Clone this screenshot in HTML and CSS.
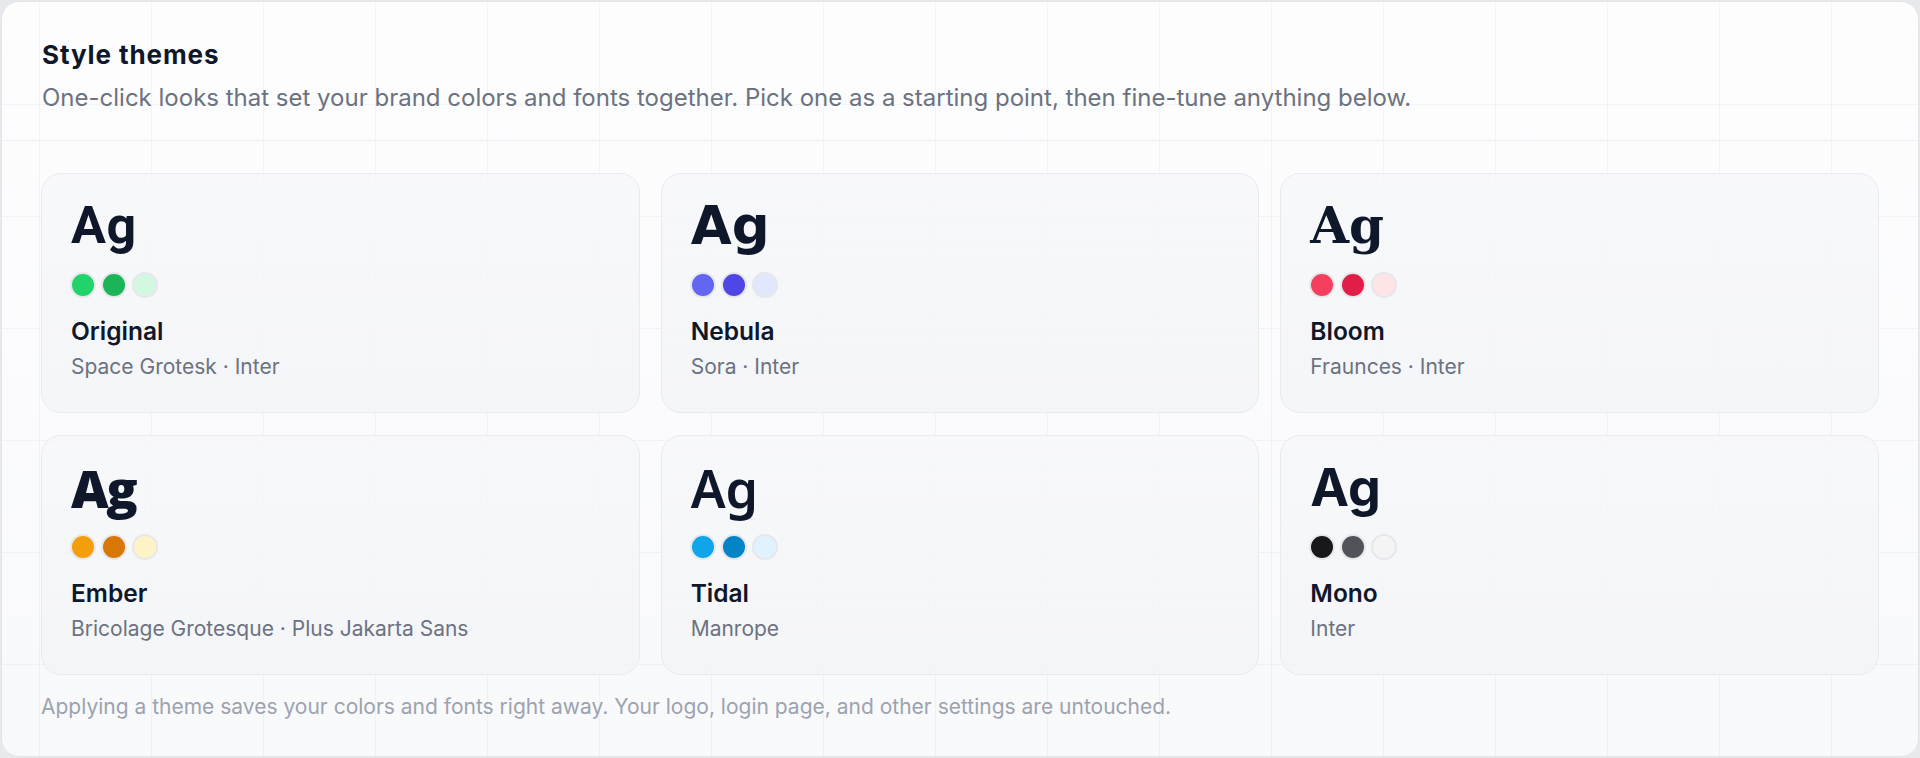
FILE: index.html
```html
<!DOCTYPE html>
<html lang="en">
<head>
<meta charset="utf-8">
<title>Style themes</title>
<link rel="stylesheet" href="styles.css">
</head>
<body>
<section class="panel">
  <header class="panel-head">
    <h2 class="title">Style themes</h2>
    <p class="subtitle">One-click looks that set your brand colors and fonts together. Pick one as a starting point, then fine-tune anything below.</p>
  </header>
  <div class="panel-body">
    <div class="theme-grid">
      <div class="theme-card">
        <div class="sample sample-original">Ag</div>
        <div class="swatches">
          <span class="dot" style="background:#22d36a"></span>
          <span class="dot" style="background:#1bb457"></span>
          <span class="dot" style="background:#d3f8e2"></span>
        </div>
        <div class="theme-name">Original</div>
        <div class="theme-fonts">Space Grotesk · Inter</div>
      </div>
      <div class="theme-card">
        <div class="sample sample-nebula">Ag</div>
        <div class="swatches">
          <span class="dot" style="background:#6366f1"></span>
          <span class="dot" style="background:#4f46e5"></span>
          <span class="dot" style="background:#e0e7ff"></span>
        </div>
        <div class="theme-name">Nebula</div>
        <div class="theme-fonts">Sora · Inter</div>
      </div>
      <div class="theme-card">
        <div class="sample sample-bloom">Ag</div>
        <div class="swatches">
          <span class="dot" style="background:#f43f5e"></span>
          <span class="dot" style="background:#e11d48"></span>
          <span class="dot" style="background:#ffe4e6"></span>
        </div>
        <div class="theme-name">Bloom</div>
        <div class="theme-fonts">Fraunces · Inter</div>
      </div>
      <div class="theme-card">
        <div class="sample sample-ember">Ag</div>
        <div class="swatches">
          <span class="dot" style="background:#f59e0b"></span>
          <span class="dot" style="background:#d97706"></span>
          <span class="dot" style="background:#fef3c7"></span>
        </div>
        <div class="theme-name">Ember</div>
        <div class="theme-fonts">Bricolage Grotesque · Plus Jakarta Sans</div>
      </div>
      <div class="theme-card">
        <div class="sample sample-tidal">Ag</div>
        <div class="swatches">
          <span class="dot" style="background:#0ea5e9"></span>
          <span class="dot" style="background:#0284c7"></span>
          <span class="dot" style="background:#e0f2fe"></span>
        </div>
        <div class="theme-name">Tidal</div>
        <div class="theme-fonts">Manrope</div>
      </div>
      <div class="theme-card">
        <div class="sample sample-mono">Ag</div>
        <div class="swatches">
          <span class="dot" style="background:#18181b"></span>
          <span class="dot" style="background:#52525b"></span>
          <span class="dot" style="background:#f4f4f5"></span>
        </div>
        <div class="theme-name">Mono</div>
        <div class="theme-fonts">Inter</div>
      </div>
    </div>
    <p class="footnote">Applying a theme saves your colors and fonts right away. Your logo, login page, and other settings are untouched.</p>
  </div>
</section>
</body>
</html>
```

FILE: styles.css
```css
* { box-sizing: border-box; }

html, body {
  margin: 0;
  padding: 0;
}

body {
  background: #e8e9ec;
  font-family: Inter, "Liberation Sans", sans-serif;
  color: #111827;
  padding: 1px;
}

.panel {
  height: 756px;
  border: 1px solid #e3e4e8;
  border-radius: 18px;
  overflow: hidden;
  background-color: #fafbfc;
  background-image:
    linear-gradient(to right, rgba(15, 23, 42, 0.035) 1px, transparent 1px),
    linear-gradient(to bottom, rgba(15, 23, 42, 0.035) 1px, transparent 1px),
    linear-gradient(to bottom, #fdfdfe, #f8f9fb);
  background-size: 112px 112px, 112px 112px, 100% 100%;
  background-position: 37px 102px, 37px 102px, 0 0;
}

.panel-head {
  padding: 37px 40px 0;
  height: 139px;
  border-bottom: 1px solid #eeeff2;
}

.title {
  margin: 0;
  font-family: Inter, sans-serif;
  font-size: 26px;
  line-height: 32px;
  font-weight: 700;
  color: #0f172a;
  letter-spacing: 0.9px;
}

.subtitle {
  margin: 12px 0 0;
  font-size: 24px;
  line-height: 30px;
  color: #6b7280;
}

.panel-body {
  padding: 32px 39px 0 39px;
}

.theme-grid {
  display: grid;
  grid-template-columns: repeat(3, 1fr);
  gap: 22px 21px;
}

.theme-card {
  height: 240px;
  border: 1px solid #e9eaee;
  border-radius: 20px;
  background: linear-gradient(to bottom, rgba(246, 247, 249, 0.75), rgba(243, 244, 247, 0.8));
  padding: 28px 28px 0;
}

.sample {
  font-size: 52px;
  line-height: 48px;
  height: 48px;
  font-weight: 700;
  color: #0f172a;
  white-space: nowrap;
  padding-left: 1px;
}

.sample-original { font-family: Roboto, sans-serif; letter-spacing: 0.5px; }
.sample-nebula { font-family: "DejaVu Sans", sans-serif; font-size: 53px; }
.sample-bloom { font-family: "DejaVu Serif", serif; font-size: 50px; }
.sample-ember { font-family: "Open Sans", sans-serif; font-weight: 800; letter-spacing: -2.5px; }
.sample-tidal { font-family: "Noto Sans", sans-serif; font-weight: 600; }
.sample-mono { font-family: Inter, sans-serif; }

.swatches {
  display: flex;
  gap: 5px;
  margin-top: 22px;
}

.dot {
  width: 26px;
  height: 26px;
  border-radius: 50%;
  border: 2px solid #e6e7eb;
}

.theme-name {
  margin-top: 18px;
  font-size: 24.5px;
  line-height: 30px;
  font-weight: 600;
  color: #0f172a;
  padding-left: 1px;
}

.theme-fonts {
  margin-top: 7px;
  font-size: 21px;
  line-height: 28px;
  color: #6b7280;
  padding-left: 1px;
}

.footnote {
  margin: 18px 0 0;
  font-size: 21px;
  line-height: 28px;
  color: #9ca3af;
}
```
